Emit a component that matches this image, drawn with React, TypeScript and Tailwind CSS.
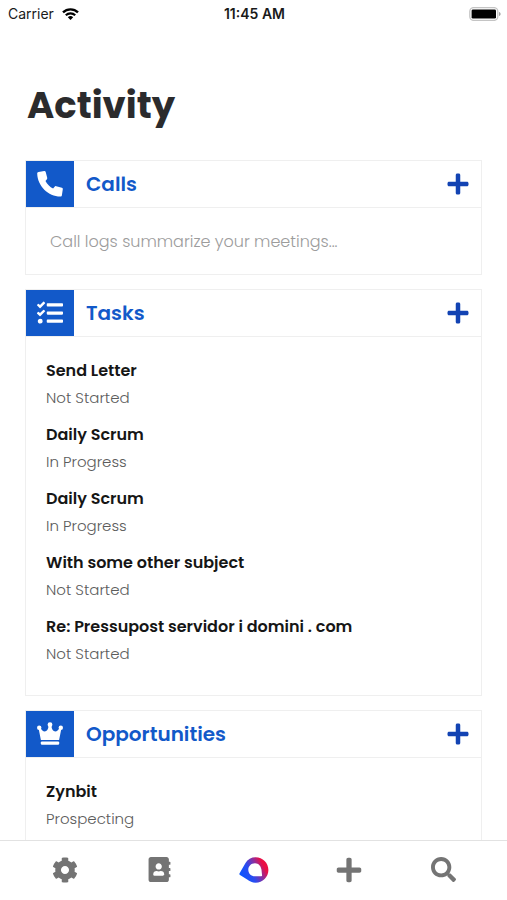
import React from "react";
import {
  FaAddressBook,
  FaCog,
  FaPlus,
  FaSearch,
  FaTasks,
} from "react-icons/fa";

type ActivityItem = { id: number; title: string; status: string };

type SectionProps = {
  title: string;
  icon: React.ReactNode;
  items?: ActivityItem[];
  placeholder?: string;
};

const tasks: ActivityItem[] = [
  { id: 1, title: "Send Letter", status: "Not Started" },
  { id: 2, title: "Daily Scrum", status: "In Progress" },
  { id: 3, title: "Daily Scrum", status: "In Progress" },
  { id: 4, title: "With some other subject", status: "Not Started" },
  {
    id: 5,
    title: "Re: Pressupost servidor i domini . com",
    status: "Not Started",
  },
];

const opportunities: ActivityItem[] = [
  { id: 1, title: "Zynbit", status: "Prospecting" },
];

const WifiIcon = () => (
  <svg viewBox="0 0 17 12" className="h-3 w-[17px]" fill="none">
    <path d="M1 4.4a10.6 10.6 0 0 1 15 0" stroke="#000" strokeWidth="2.3" />
    <path d="M3.8 7.3a6.7 6.7 0 0 1 9.4 0" stroke="#000" strokeWidth="2.2" />
    <path d="M8.5 12 5.8 9.2a3.9 3.9 0 0 1 5.4 0z" fill="#000" />
  </svg>
);

const BatteryIcon = () => (
  <svg viewBox="0 0 32 14" className="h-3.5 w-8" fill="none">
    <rect x="0.8" y="0.6" width="28" height="12.8" rx="3.8" stroke="#c4c4c4" strokeWidth="1.3" />
    <rect x="2.6" y="2.4" width="24.4" height="9.2" rx="1.4" fill="#000" />
    <path d="M30 5v4c1-.4 1.6-1.1 1.6-2S31 5.400 30 5z" fill="#a3a3a3" />
  </svg>
);

const PhoneIcon = () => (
  <svg viewBox="0 0 26 26" className="size-[26px]" fill="currentColor">
    <path d="M1.500.9 7.200.1c.7-.1 1.300.2 1.500.9l1.500 5.800c.2.6 0 1.200-.5 1.600L8.500 9.900c1.500 3.100 4.400 6 7.600 7.500l1.500-1.700c.4-.5 1-.7 1.600-.5l5.700 1.600c.7.2 1 .8.900 1.500l-.9 6c-.1.700-.6 1.300-1.400 1.300C11.400 25.700.4 15.200.2 2.300.2 1.500.8 1 1.500.9z" />
  </svg>
);

const CrownIcon = () => (
  <svg viewBox="0 0 26 24" className="h-6 w-[26px]" fill="currentColor">
    <circle cx="2.2" cy="5.7" r="2.2" />
    <circle cx="13" cy="2.7" r="2.4" />
    <circle cx="23.8" cy="5.7" r="2.2" />
    <path d="M1.700 7 3.700 6.300c1 2 2.300 3.100 4 3.100 2.200 0 3.500-2 3.900-5.400h2.800c.4 3.400 1.700 5.400 3.900 5.400 1.700 0 3-1.100 4-3.100l2 .7-2.200 11H3.900z" />
    <rect x="3.8" y="19.4" width="18.4" height="3.4" rx="1.2" />
  </svg>
);

const LogoIcon = () => (
  <svg viewBox="0 0 30 26" className="h-[26px] w-[30px]">
    <defs>
      <linearGradient id="logo" x1="3" y1="20" x2="27" y2="7" gradientUnits="userSpaceOnUse">
        <stop offset="0" stopColor="#0b55ff" />
        <stop offset="0.35" stopColor="#2a4cf0" />
        <stop offset="0.65" stopColor="#8a2fa0" />
        <stop offset="0.9" stopColor="#ea0f45" />
      </linearGradient>
    </defs>
    <path
      fill="url(#logo)"
      fillRule="evenodd"
      d="M.6 16.300C.1 17 .3 17.600 1 18l7.200 4.500c2.300 2 5.200 3.200 8.300 3.200C23.700 25.700 29.400 20 29.400 13S23.700.3 16.600.3C12.300.3 8.700 2.300 6.500 5.900zM16 6.200c-3.900 0-6.700 2.900-6.700 6.600 0 3.800 2.800 6.500 6.700 6.500 2.200 0 4.300-.2 6.200-.1.700 0 1-.2.900-.8-.4-2-.3-3.600-.6-5.600-.5-3.800-2.900-6.600-6.500-6.600z"
    />
  </svg>
);

const Section = ({ title, icon, items, placeholder }: SectionProps) => {
  return (
    <section className="border border-[#efefef] bg-white">
      <header className="flex items-center border-b border-[#efefef]">
        <div className="flex h-[46px] w-12 items-center justify-center bg-[#1259c9] text-white">
          {icon}
        </div>
        <h2 className="ml-3 flex-1 text-xl leading-7 font-semibold text-[#1259c9]">
          {title}
        </h2>
        <button
          type="button"
          aria-label={`Add to ${title}`}
          className="mr-[11px] text-[#1243b3]"
        >
          <FaPlus className="size-6" />
        </button>
      </header>
      {placeholder && (
        <p className="px-6 pt-[21px] pb-[19px] text-base leading-[26px] font-light text-[#9c9c9c]">
          {placeholder}
        </p>
      )}
      {items && (
        <ul className="flex flex-col gap-2.5 px-5 pt-5 pb-7">
          {items.map((item) => (
            <li key={item.id}>
              <p className="text-base leading-[27px] font-semibold text-[#161616]">
                {item.title}
              </p>
              <p className="text-[15px] leading-[27px] font-light text-[#5c5c5c]">
                {item.status}
              </p>
            </li>
          ))}
        </ul>
      )}
    </section>
  );
};

const navItems = [
  { label: "Settings", icon: <FaCog className="size-[26px]" /> },
  { label: "Contacts", icon: <FaAddressBook className="size-[25px]" /> },
  { label: "Home", icon: <LogoIcon /> },
  { label: "Add", icon: <FaPlus className="size-7" /> },
  { label: "Search", icon: <FaSearch className="size-[25px]" /> },
];

export default function App() {
  return (
    <div className="flex h-screen flex-col bg-white font-['Poppins','Inter',sans-serif]">
      <div className="grid h-7 shrink-0 grid-cols-3 items-center pr-1.5 pl-2 font-['Inter',sans-serif] text-sm text-[#1a1a1a]">
        <div className="flex items-center gap-2">
          <span>Carrier</span>
          <WifiIcon />
        </div>
        <span className="text-center font-semibold">11:45 AM</span>
        <div className="flex justify-end">
          <BatteryIcon />
        </div>
      </div>

      <main className="min-h-0 flex-1 overflow-hidden px-[25px] pt-[53px]">
        <h1 className="px-0.5 text-[37px] leading-12 font-bold text-[#2b2b2d]">
          Activity
        </h1>
        <div className="mt-[31px] flex flex-col gap-3.5">
          <Section
            title="Calls"
            icon={<PhoneIcon />}
            placeholder="Call logs summarize your meetings..."
          />
          <Section
            title="Tasks"
            icon={<FaTasks className="size-[26px]" />}
            items={tasks}
          />
          <Section
            title="Opportunities"
            icon={<CrownIcon />}
            items={opportunities}
          />
        </div>
      </main>

      <nav className="flex h-[60px] shrink-0 items-center border-t border-[#e2e2e2] bg-white pr-4 pb-0.5 pl-[18px] text-[#747474]">
        {navItems.map((item) => (
          <button
            key={item.label}
            type="button"
            aria-label={item.label}
            className="flex flex-1 justify-center"
          >
            {item.icon}
          </button>
        ))}
      </nav>
    </div>
  );
}
